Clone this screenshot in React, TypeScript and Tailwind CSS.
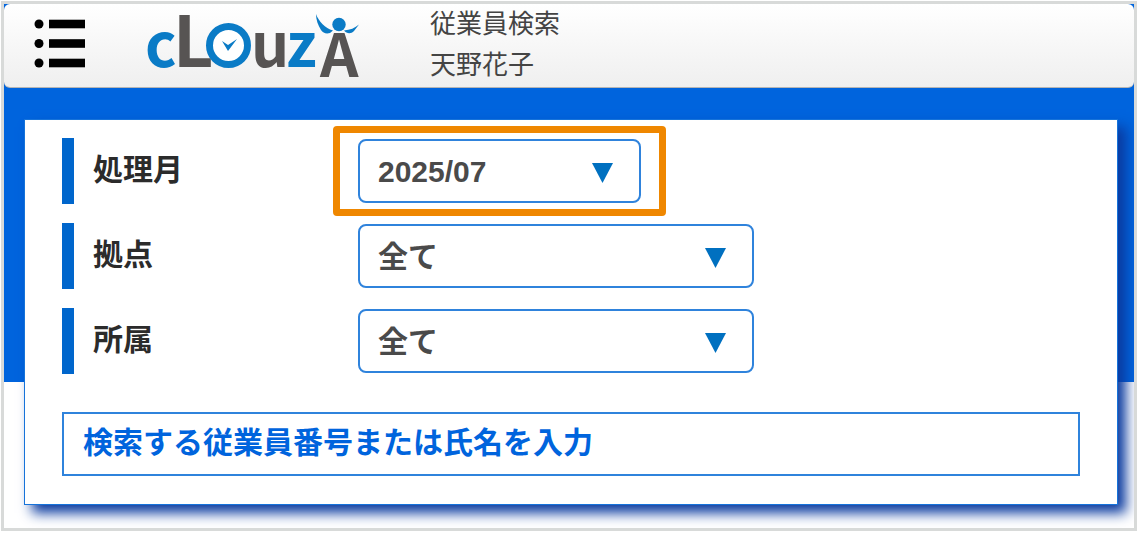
import type { ReactNode } from "react"

function ListIcon() {
  return (
    <svg width="52" height="50" viewBox="0 0 52 50" aria-hidden="true">
      {[5, 24.5, 44].map((y) => (
        <g key={y}>
          <circle cx="5" cy={y} r="4.5" />
          <rect x="15" y={y - 4.3} width="36" height="8.6" />
        </g>
      ))}
    </svg>
  )
}

function Logo() {
  return (
    <svg
      width="220"
      height="72"
      viewBox="0 0 220 72"
      role="img"
      aria-label="CLOUZA"
      className="overflow-visible font-['Noto_Sans_CJK_JP',sans-serif] font-bold"
    >
      <g fontSize="60">
        <text x="1" y="57" fill="#0a7bc6">c</text>
        <text x="107" y="57" fill="#575453">u</text>
        <text x="142" y="57" fill="#0a7bc6">z</text>
        <text x="176" y="67" fill="#575453">A</text>
      </g>
      <text x="29" y="57" fontSize="70" fill="#575453">L</text>

      {/* clock */}
      <circle cx="84.500" cy="35.500" r="19" fill="#fff" stroke="#0a7bc6" strokeWidth="7" />
      <path d="M78 31 L84 35 L93 29 L84 41 Z" fill="#0a7bc6" />

      {/* raised arms */}
      <circle cx="195" cy="14.500" r="6.700" fill="#0a7bc6" />
      <path d="M172 4 C175 12 181 18 189 20.500 L186 23 C182 24 179 23 177 20 C174 15 172 10 172 4 Z" fill="#0a7bc6" />
      <path d="M215 14.500 C211 18 206 20 200 20.500 C203 24 207 24 210 21 Z" fill="#0a7bc6" />
    </svg>
  )
}

function Row({ id, label, children }: { id: string; label: string; children: ReactNode }) {
  return (
    <div className="flex h-[66px] items-center border-l-12 border-[#0066cc] pl-[19px]">
      <label htmlFor={id} className="w-[265px] shrink-0 pb-0.5 text-[30px] leading-9 font-bold text-[#2b2b2b]">
        {label}
      </label>
      {children}
    </div>
  )
}

function Select({ id, options }: { id: string; options: string[] }) {
  return (
    <>
      <select
        id={id}
        className="h-16 w-full appearance-none rounded-lg border-2 border-[#2f83dc] bg-white pl-[18px] text-[30px] font-bold text-[#4a4a4a]"
      >
        {options.map((o) => (
          <option key={o}>{o}</option>
        ))}
      </select>
      <svg
        width="21"
        height="20"
        viewBox="0 0 21 20"
        className="pointer-events-none absolute top-6 right-7"
        aria-hidden="true"
      >
        <path d="M0 0 H21 L10.500 20 Z" fill="#0070c0" />
      </svg>
    </>
  )
}

export default function App() {
  return (
    <div className="bg-white p-px font-['Liberation_Sans','Noto_Sans_CJK_JP',sans-serif]">
      <div className="overflow-hidden border-3 border-[#d8dad9] bg-[linear-gradient(#0064dd_378px,#fff_378px)]">
        <header className="flex h-[84px] items-center rounded-md border-b border-[#b5b5b5] bg-linear-to-b from-white to-[#efefef] pb-1 pl-[30px]">
          <button type="button" aria-label="メニュー">
            <ListIcon />
          </button>
          <a href="#" className="ml-[58px] pt-1">
            <Logo />
          </a>
          <div className="ml-[66px] pt-0.5 text-[26px] leading-[41px] text-[#444]">
            <p>従業員検索</p>
            <p>天野花子</p>
          </div>
        </header>

        <main className="pt-[31px] pr-4 pb-[23px] pl-5">
          <form className="border border-[#1673da] bg-white px-[37px] pt-[18px] pb-7 shadow-[8px_8px_12px_#0a3a9f]">
            <div className="flex flex-col gap-[19px]">
              <Row id="month" label="処理月">
                <div className="relative w-[283px]">
                  <Select id="month" options={["2025/07", "2025/06", "2025/05"]} />
                  <div className="pointer-events-none absolute -inset-x-[25px] -inset-y-[13px] rounded-sm border-7 border-[#ef8700]" />
                </div>
              </Row>
              <Row id="base" label="拠点">
                <div className="relative w-[396px]">
                  <Select id="base" options={["全て"]} />
                </div>
              </Row>
              <Row id="dept" label="所属">
                <div className="relative w-[396px]">
                  <Select id="dept" options={["全て"]} />
                </div>
              </Row>
            </div>
            <input
              type="text"
              aria-label="従業員番号または氏名"
              placeholder="検索する従業員番号または氏名を入力"
              className="mt-[38px] block h-16 w-full border-2 border-[#2f83dc] px-[19px] pb-0.5 text-[30px] font-bold text-[#0064dd] placeholder:text-[#0064dd]"
            />
          </form>
        </main>
      </div>
    </div>
  )
}
